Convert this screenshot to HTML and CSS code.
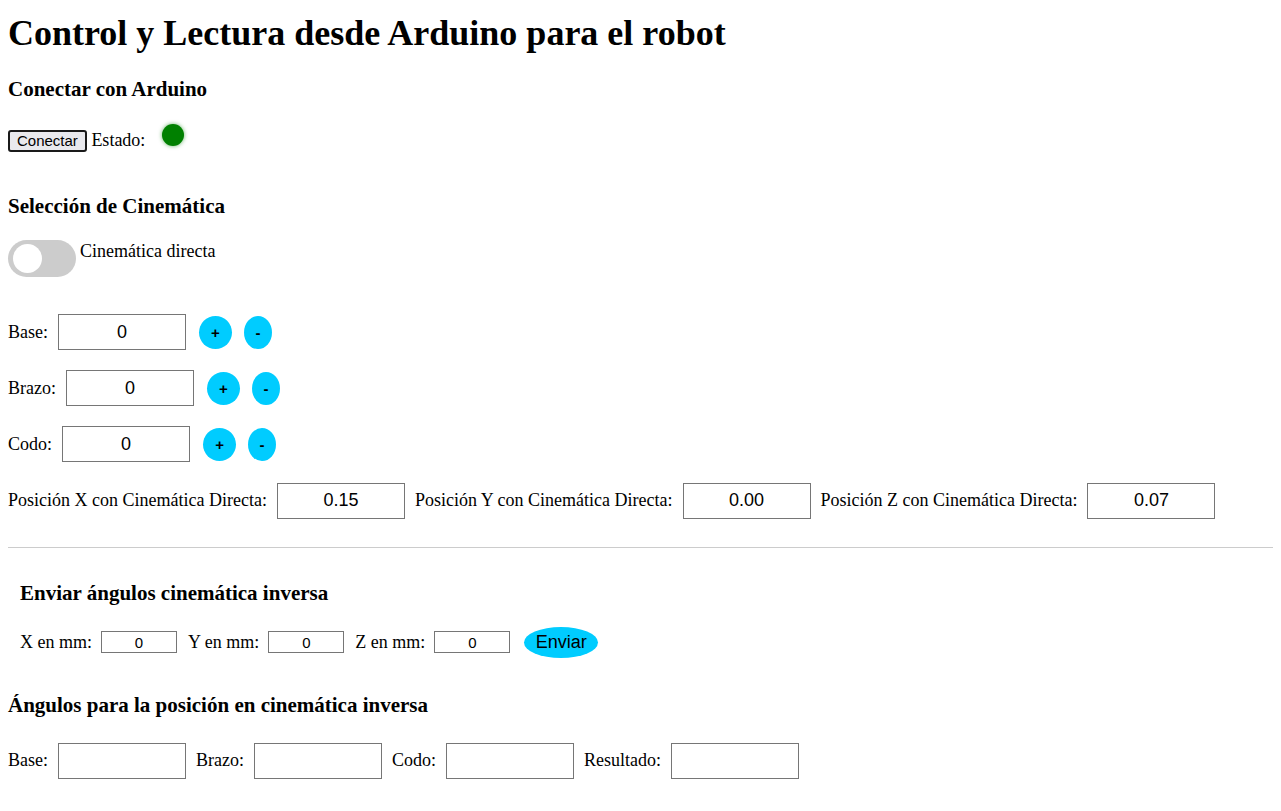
FILE: index.html
```html
<!DOCTYPE html>
<html lang="es">
<head>
<meta charset="utf-8">
<title>Control y Lectura desde Arduino</title>
<link rel="stylesheet" href="styles.css">
</head>
<body>
<h1 class="title">Control y Lectura desde Arduino para el robot</h1>

<h3 class="sec sec-connect">Conectar con Arduino</h3>
<div class="connect-row">
  <button class="btn-connect">Conectar</button> Estado: <span class="status-dot"></span>
</div>

<h3 class="sec sec-kin">Selección de Cinemática</h3>
<div class="toggle-row">
  <span class="switch"><span class="knob"></span></span>
  <span class="toggle-label">Cinemática directa</span>
</div>

<div class="joints">
  <div class="joint-row">
    <span>Base:</span>
    <input class="field" type="text" value="0">
    <button class="round plus">+</button>
    <button class="round minus">-</button>
  </div>
  <div class="joint-row">
    <span>Brazo:</span>
    <input class="field" type="text" value="0">
    <button class="round plus">+</button>
    <button class="round minus">-</button>
  </div>
  <div class="joint-row">
    <span>Codo:</span>
    <input class="field" type="text" value="0">
    <button class="round plus">+</button>
    <button class="round minus">-</button>
  </div>
  <div class="pos-row">
    <span>Posición X con Cinemática Directa:</span>
    <input class="field" type="text" value="0.15">
    <span>Posición Y con Cinemática Directa:</span>
    <input class="field" type="text" value="0.00">
    <span>Posición Z con Cinemática Directa:</span>
    <input class="field" type="text" value="0.07">
  </div>
</div>

<hr class="divider">

<div class="inverse">
  <h3 class="sec sec-send">Enviar ángulos cinemática inversa</h3>
  <div class="send-row">
    <span>X en mm:</span>
    <input class="small" type="text" value="0">
    <span>Y en mm:</span>
    <input class="small" type="text" value="0">
    <span>Z en mm:</span>
    <input class="small" type="text" value="0">
    <button class="btn-send">Enviar</button>
  </div>
</div>

<h3 class="sec sec-angles">Ángulos para la posición en cinemática inversa</h3>
<div class="result-row">
  <span>Base:</span>
  <input class="field" type="text">
  <span>Brazo:</span>
  <input class="field" type="text">
  <span>Codo:</span>
  <input class="field" type="text">
  <span>Resultado:</span>
  <input class="field" type="text">
</div>
</body>
</html>
```

FILE: styles.css
```css
html, body {
  background: #fff;
}
body {
  margin: 0 8px;
  padding: 0;
  font-family: "Liberation Serif", "Times New Roman", serif;
  font-size: 18px;
  color: #000;
  overflow-x: hidden;
}
.title {
  font-size: 36px;
  line-height: 41px;
  font-weight: bold;
  margin: 0;
  padding-top: 13px;
}
.sec {
  font-size: 21px;
  line-height: 24px;
  font-weight: bold;
  margin: 0;
}
.sec-connect { margin-top: 23px; }
.connect-row {
  margin-top: 23px;
  line-height: 18px;
}
.btn-connect {
  font-family: "Liberation Sans", Arial, sans-serif;
  font-size: 15px;
  line-height: 16px;
  padding: 1px 7px;
  border: 2px solid #1a1a1a;
  border-radius: 3px;
  background: #e9e9ed;
  color: #000;
  margin: 0;
}
.status-dot {
  display: inline-block;
  width: 22px;
  height: 22px;
  border-radius: 50%;
  background: #008000;
  box-shadow: 0 0 4px rgba(0, 128, 0, 0.6);
  margin-left: 12px;
  vertical-align: baseline;
}
.sec-kin { margin-top: 42px; }
.toggle-row {
  display: flex;
  align-items: flex-start;
  margin-top: 22px;
}
.switch {
  position: relative;
  width: 68px;
  height: 37px;
  border-radius: 19px;
  background: #ccc;
  flex: none;
}
.knob {
  position: absolute;
  left: 5px;
  top: 4px;
  width: 29px;
  height: 29px;
  border-radius: 50%;
  background: #fff;
}
.toggle-label {
  margin-left: 4px;
  line-height: 20px;
  padding-top: 1px;
}
.joints {
  margin-top: 37px;
  display: flex;
  flex-direction: column;
  gap: 20.2px;
}
.joint-row, .pos-row, .result-row, .send-row {
  display: flex;
  align-items: center;
}
.field {
  box-sizing: border-box;
  width: 128px;
  height: 36px;
  border: 1px solid #767676;
  font-family: "Liberation Sans", Arial, sans-serif;
  font-size: 18px;
  text-align: center;
  padding: 0;
  margin: 0 0 0 10px;
  background: #fff;
  color: #000;
}
.round {
  height: 33px;
  border: none;
  border-radius: 50%;
  background: #00ccff;
  font-family: "Liberation Sans", Arial, sans-serif;
  font-size: 15px;
  font-weight: bold;
  color: #000;
  padding: 0;
}
.plus { width: 33px; margin-left: 13px; }
.minus { width: 28px; margin-left: 12px; }
.pos-row .field { margin: 0 10px 0 10px; }
.divider {
  border: none;
  border-top: 1px solid #ccc;
  margin: 28px -8px 0 0;
  height: 0;
}
.inverse {
  padding: 0 12px;
}
.sec-send { margin-top: 33px; }
.send-row {
  margin-top: 22px;
  height: 31px;
}
.small {
  box-sizing: border-box;
  width: 76px;
  height: 22px;
  border: 1px solid #767676;
  font-family: "Liberation Sans", Arial, sans-serif;
  font-size: 15px;
  text-align: center;
  padding: 0;
  margin: 0 11px 0 9px;
  color: #000;
}
.btn-send {
  height: 31px;
  width: 74px;
  border: none;
  border-radius: 50%;
  background: #00ccff;
  font-family: "Liberation Sans", Arial, sans-serif;
  font-size: 18px;
  color: #000;
  padding: 0;
  margin-left: 3px;
}
.sec-angles { margin-top: 35px; }
.result-row {
  margin-top: 26px;
}
.result-row .field { margin: 0 10px 0 10px; }
```
